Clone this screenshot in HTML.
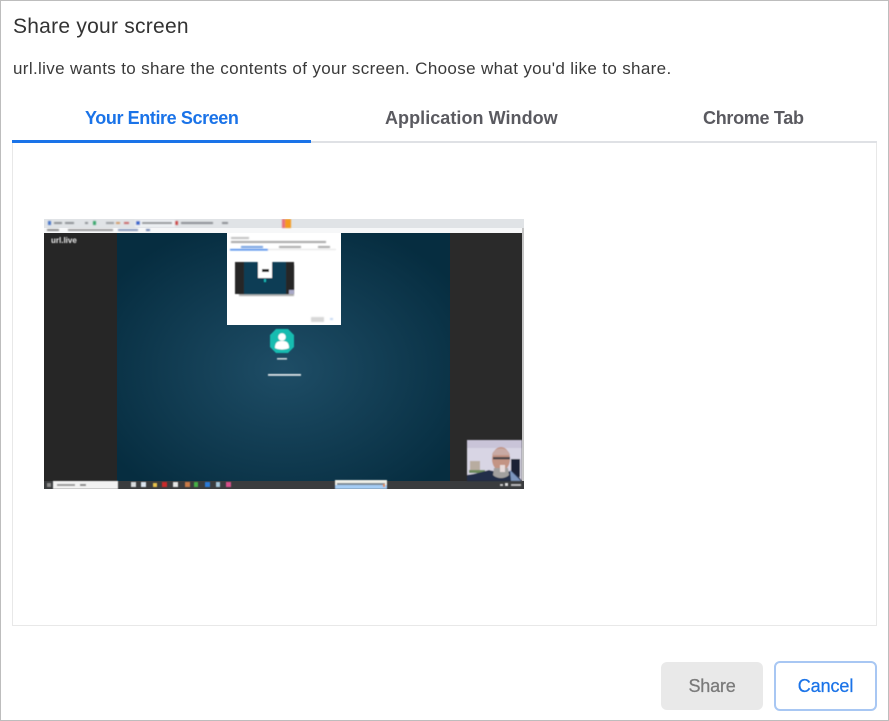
<!DOCTYPE html>
<html lang="en">
<head>
<meta charset="utf-8">
<title>Share your screen</title>
<style>
html,body{margin:0;padding:0;background:#fff;}
body{width:889px;height:721px;position:relative;overflow:hidden;font-family:"Liberation Sans",sans-serif;}
.frame{position:absolute;left:0;top:0;width:887px;height:719px;border:1px solid #bdbdbd;}
.t{position:absolute;white-space:nowrap;line-height:1;}
.title{left:13px;top:16px;font-size:21px;color:#333;letter-spacing:.25px;}
.sub{left:13px;top:60px;font-size:17px;color:#3a3a3a;letter-spacing:.35px;}
.tab{top:109px;font-size:18px;font-weight:700;color:#5a5a60;}
.box{position:absolute;left:12px;top:141px;width:863px;height:484px;border:1px solid #e8e8e8;border-top:0;}
.rule{position:absolute;left:12px;top:141px;width:865px;height:2px;background:#dfe1e5;}
.active{position:absolute;left:12px;top:140px;width:299px;height:3px;background:#1a73e8;}
.btn{position:absolute;box-sizing:border-box;text-align:center;font-size:18px;-webkit-text-stroke:.25px currentColor;}
.share{left:661px;top:662px;width:102px;height:48px;background:#e9e9e9;border-radius:6px;color:#7a7a7a;line-height:48px;letter-spacing:-.2px;}
.cancel{left:774px;top:661px;width:103px;height:50px;background:#fff;border:2px solid #a8c7f3;border-radius:6px;color:#1a73e8;line-height:47px;letter-spacing:-.1px;}
svg{position:absolute;left:44px;top:219px;}
</style>
</head>
<body>
<div class="frame"></div>
<div class="t title">Share your screen</div>
<div class="t sub">url.live wants to share the contents of your screen. Choose what you'd like to share.</div>
<div class="t tab" style="left:85px;color:#1a73e8;letter-spacing:-.4px;">Your Entire Screen</div>
<div class="t tab" style="left:385px;letter-spacing:.05px;">Application Window</div>
<div class="t tab" style="left:703px;letter-spacing:-.3px;">Chrome Tab</div>
<div class="box"></div>
<div class="rule"></div>
<div class="active"></div>

<svg width="480" height="270" viewBox="0 0 480 270">
  <defs>
    <radialGradient id="bg" cx="50%" cy="55%" r="62%">
      <stop offset="0" stop-color="#1e4d66"/>
      <stop offset="1" stop-color="#062d40"/>
    </radialGradient>
    <filter id="b" x="-5%" y="-5%" width="110%" height="110%"><feGaussianBlur stdDeviation=".8"/></filter>
    <filter id="s" x="-5%" y="-5%" width="110%" height="110%"><feGaussianBlur stdDeviation=".5"/></filter>
  </defs>
  <rect x="0" y="0" width="480" height="9" fill="#e0e3e6"/>
  <rect x="0" y="9" width="478" height="5" fill="#f6f7f8"/>
  <rect x="0" y="14" width="73" height="248" fill="#262626"/>
  <rect x="73" y="14" width="333" height="248" fill="url(#bg)"/>
  <rect x="406" y="14" width="72" height="248" fill="#2a2a2a"/>
  <rect x="478" y="9" width="2" height="253" fill="#c4c4c4"/>
  <rect x="0" y="262" width="480" height="8" fill="#3a3c3e"/>
  <g filter="url(#b)">
    <rect x="4" y="2" width="3" height="4" fill="#4a76c8"/>
    <rect x="10" y="3" width="8" height="2" fill="#8c9094"/><rect x="21" y="3" width="9" height="2" fill="#8c9094"/>
    <rect x="41" y="3" width="3" height="2" fill="#8c9094"/><rect x="49" y="2" width="3" height="4" fill="#3aa76d"/>
    <rect x="62" y="3" width="8" height="2" fill="#9a9ea2"/><rect x="72" y="3" width="4" height="2" fill="#d19a66"/>
    <rect x="80" y="3" width="5" height="2" fill="#c9676b"/>
    <rect x="91" y="1" width="40" height="7" fill="#eef1f4"/>
    <rect x="92" y="2" width="4" height="4" fill="#3366cc"/><rect x="98" y="3" width="30" height="2" fill="#8a8e92"/>
    <rect x="131" y="2" width="3" height="4" fill="#cc4a4a"/><rect x="137" y="3" width="32" height="2" fill="#8a8e92"/>
    <rect x="178" y="3" width="6" height="2" fill="#8a8e92"/>
    <rect x="3" y="10" width="12" height="2" fill="#888"/><rect x="24" y="10" width="45" height="2" fill="#999"/>
    <rect x="74" y="10" width="20" height="2" fill="#8899bb"/><rect x="102" y="10" width="4" height="2" fill="#6a80b0"/>
    <rect x="238" y="0" width="3" height="9" fill="#e8707a"/><rect x="241" y="0" width="6" height="9" fill="#f59a1c"/>
  </g>
  <text x="7" y="24" font-family="Liberation Sans, sans-serif" font-size="8" font-weight="700" fill="#e8e8e8" filter="url(#s)">url.live</text>
  <rect x="183" y="14" width="114" height="92" fill="#fff"/>
  <g filter="url(#b)">
    <rect x="187" y="18" width="18" height="2" fill="#c0c0c0"/>
    <rect x="187" y="22" width="95" height="2" fill="#a4a4a4"/>
    <rect x="197" y="27" width="22" height="2" fill="#6f9de0"/>
    <rect x="235" y="27" width="22" height="2" fill="#a8a8a8"/>
    <rect x="274" y="27" width="12" height="2" fill="#a8a8a8"/>
    <rect x="186" y="30" width="38" height="1.5" fill="#3a80e8"/>
    <rect x="224" y="30" width="68" height="1" fill="#e3e3e3"/>
    <rect x="267" y="98" width="13" height="5" fill="#d8d8d8"/>
    <rect x="286" y="99" width="3" height="2" fill="#c4d8f4"/>
    <rect x="195" y="46" width="55" height="31" fill="#a8a8a8"/>
  </g>
  <g filter="url(#s)">
    <rect x="191" y="43" width="59" height="32" fill="#262626"/>
    <rect x="200" y="43" width="42" height="32" fill="#0f3d55"/>
    <rect x="214" y="43" width="14" height="16" fill="#fff"/>
    <rect x="218" y="50" width="7" height="3" fill="#222"/>
    <rect x="220" y="60" width="2" height="3" fill="#18b5b5"/>
    <rect x="245" y="71" width="5" height="4" fill="#a8a8c8"/>
  </g>
  <g filter="url(#s)">
    <polygon points="232,110 244,110 250,116 250,128 244,134 232,134 226,128 226,116" fill="#12bcb0"/>
    <circle cx="238" cy="118" r="3.8" fill="#fff"/>
    <path d="M231 129c0-6 3-7 7-7s7 1 7 7c-3 2-11 2-14 0z" fill="#fff"/>
    <rect x="233" y="139" width="10" height="1.6" fill="#cfd8dc"/>
    <rect x="224" y="155" width="33" height="1.8" fill="#dfe5e8"/>
  </g>
  <g filter="url(#s)">
    <rect x="423" y="221" width="55" height="41" fill="#d8d5e4"/>
    <path d="M423 221h55v8h-55z" fill="#c9c4d8"/>
    <rect x="426" y="242" width="10" height="11" fill="#b8aca0"/>
    <rect x="425" y="251" width="16" height="3" fill="#6d8a5c"/>
    <rect x="467" y="240" width="9" height="18" fill="#1b2334"/>
    <path d="M423 262v-6c8-1 15-3 22-5 5 2 18 2 22 1 4 2 8 5 11 10z" fill="#222d4a"/>
    <path d="M466 251l11 11h-10z" fill="#7b95bd"/>
    <ellipse cx="457" cy="240" rx="9" ry="12" fill="#c39484"/>
    <path d="M448 236c1-8 16-9 18 0z" fill="#c8aaa4"/>
    <rect x="449" y="238" width="17" height="2.4" fill="#4b4549"/>
    <path d="M450 249h14l1 7c-4 4-12 4-16 0z" fill="#a2a09f"/>
    <rect x="456" y="246" width="5" height="7" fill="#e8dcdc"/>
  </g>
  <g filter="url(#s)">
    <rect x="3" y="264" width="4" height="4" fill="#888"/>
    <rect x="9" y="262" width="65" height="8" fill="#f2f2f2"/>
    <rect x="13" y="265" width="18" height="2" fill="#9a9a9a"/>
    <rect x="36" y="265" width="6" height="2" fill="#888"/>
    <rect x="87" y="263" width="5" height="5" fill="#d8dcde"/>
    <rect x="97" y="263" width="5" height="5" fill="#dce6f0"/>
    <rect x="109" y="264" width="4" height="4" fill="#e8c14a"/>
    <rect x="118" y="263" width="5" height="5" fill="#c92a2a"/>
    <rect x="129" y="263" width="5" height="5" fill="#e6e6e6"/>
    <rect x="141" y="263" width="5" height="5" fill="#c87a46"/>
    <rect x="150" y="263" width="4" height="5" fill="#45b045"/>
    <rect x="161" y="263" width="5" height="5" fill="#2a7ad8"/>
    <rect x="172" y="263" width="4" height="5" fill="#a6c8dc"/>
    <rect x="182" y="263" width="5" height="5" fill="#d84f8a"/>
    <rect x="291" y="265" width="52" height="5" fill="#a5cdf5"/>
    <rect x="291" y="261" width="52" height="5" fill="#f0f0e8"/>
    <rect x="293" y="264" width="48" height="2" fill="#7a8894"/>
    <rect x="339" y="265" width="2" height="3" fill="#e08a4a"/>
    <rect x="456" y="265" width="3" height="2" fill="#ccc"/><rect x="461" y="264" width="3" height="3" fill="#ddd"/>
    <rect x="467" y="265" width="10" height="2" fill="#bbb"/>
  </g>
</svg>

<div class="btn share">Share</div>
<div class="btn cancel">Cancel</div>
</body>
</html>
